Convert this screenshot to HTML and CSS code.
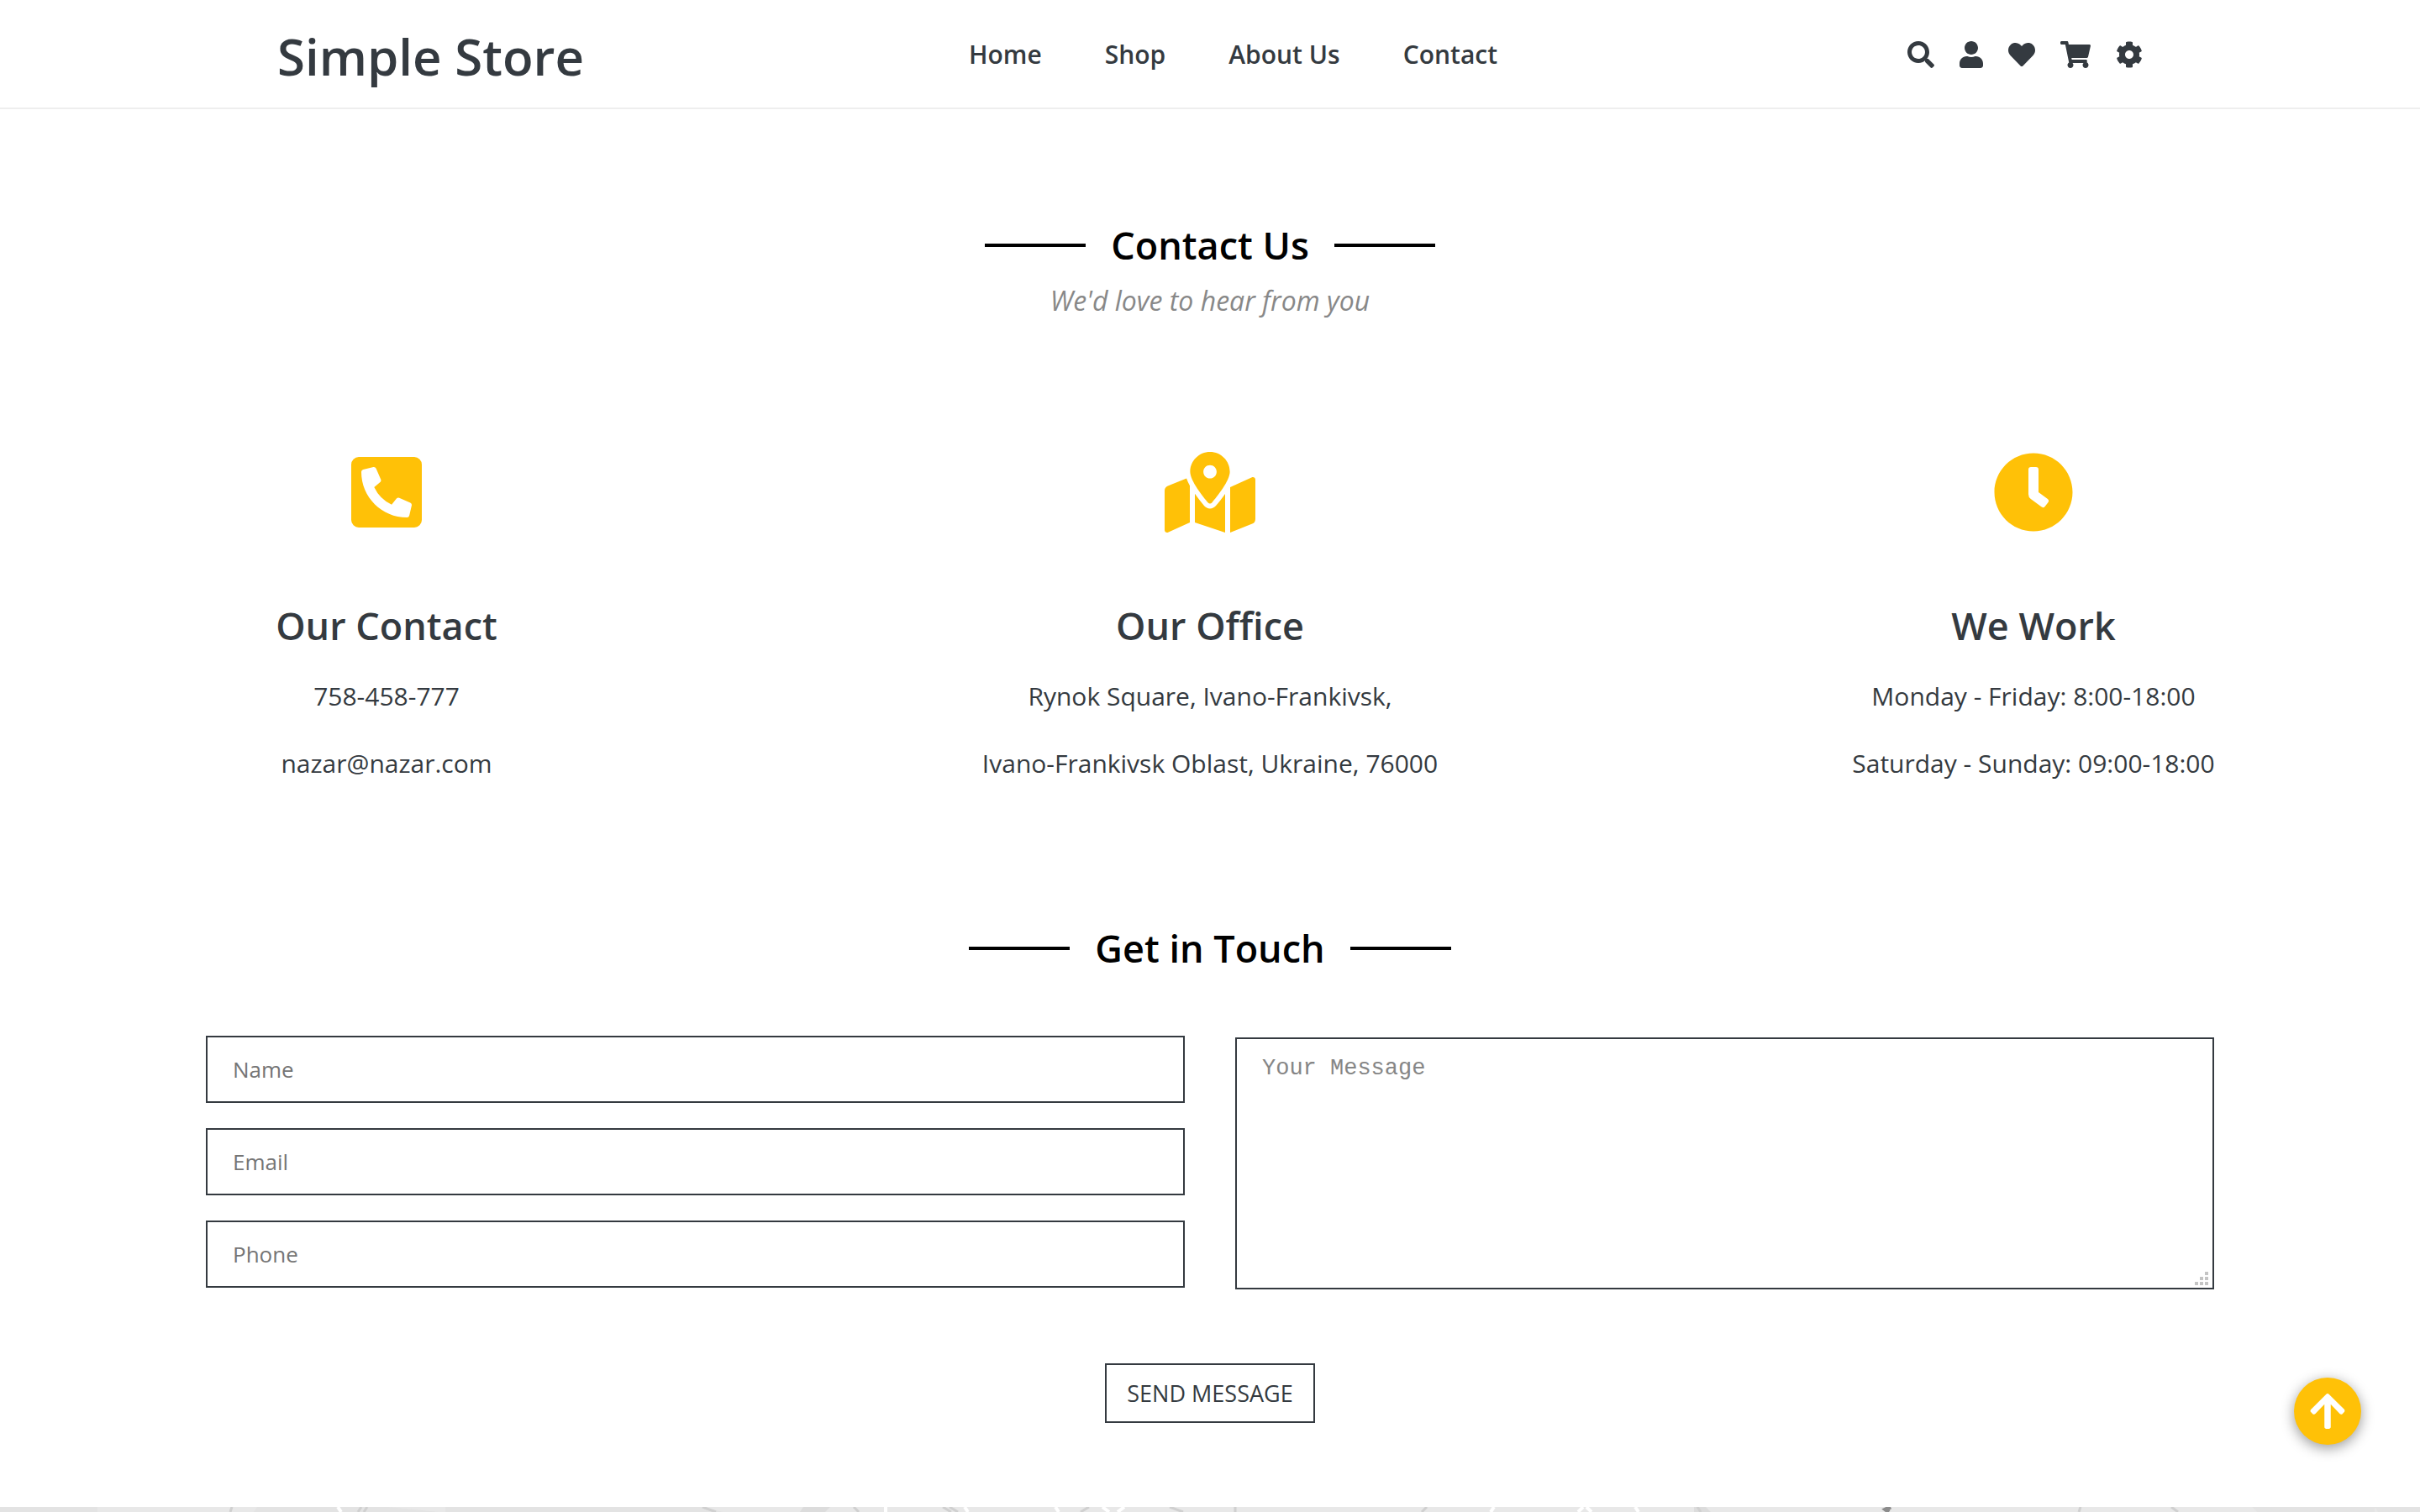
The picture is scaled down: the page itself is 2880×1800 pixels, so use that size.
FILE: index.html
```html
<!DOCTYPE html>
<html lang="en">
<head>
  <meta charset="utf-8">
  <meta name="viewport" content="width=device-width, initial-scale=1">
  <title>Simple Store</title>
  <link rel="stylesheet" href="styles.css">
</head>
<body>
  <header class="header">
    <div class="container header-inner">
      <a class="logo" href="#">Simple Store</a>
      <nav class="nav">
        <a href="#">Home</a>
        <a href="#">Shop</a>
        <a href="#">About Us</a>
        <a href="#">Contact</a>
      </nav>
      <div class="tools">
        <a href="#" aria-label="Search"><svg class="icon" viewBox="0 0 512 512"><path d="M505 442.7L405.3 343c-4.500-4.500-10.600-7-17-7H372c27.600-35.300 44-79.700 44-128C416 93.100 322.900 0 208 0S0 93.100 0 208s93.100 208 208 208c48.300 0 92.700-16.400 128-44v16.300c0 6.400 2.500 12.500 7 17l99.700 99.700c9.400 9.400 24.600 9.400 33.900 0l28.300-28.300c9.400-9.400 9.400-24.600.1-34zM208 336c-70.700 0-128-57.200-128-128 0-70.700 57.200-128 128-128 70.700 0 128 57.200 128 128 0 70.700-57.200 128-128 128z"/></svg></a>
        <a href="#" aria-label="Account"><svg class="icon" viewBox="0 0 448 512"><path d="M224 256c70.700 0 128-57.300 128-128S294.700 0 224 0 96 57.300 96 128s57.300 128 128 128zm89.600 32h-16.700c-22.200 10.200-46.900 16-72.900 16s-50.600-5.800-72.900-16h-16.700C60.200 288 0 348.200 0 422.400V464c0 26.500 21.500 48 48 48h352c26.500 0 48-21.500 48-48v-41.600c0-74.200-60.200-134.400-134.400-134.400z"/></svg></a>
        <a href="#" aria-label="Wishlist"><svg class="icon" viewBox="0 0 512 512"><path d="M462.300 62.600C407.500 15.900 326 24.300 275.700 76.200L256 96.500l-19.700-20.300C186.100 24.300 104.500 15.900 49.700 62.600c-62.800 53.600-66.100 149.800-9.900 207.900l193.500 199.800c12.500 12.900 32.800 12.900 45.300 0l193.500-199.800c56.300-58.100 53-154.300-9.800-207.900z"/></svg></a>
        <a href="#" aria-label="Cart"><svg class="icon" viewBox="0 0 576 512"><path d="M528.120 301.319l47.273-208C578.806 78.301 567.391 64 551.990 64H159.208l-9.166-44.810C147.758 8.021 137.930 0 126.529 0H24C10.745 0 0 10.745 0 24v16c0 13.255 10.745 24 24 24h69.883l70.248 343.435C147.325 417.100 136 435.222 136 456c0 30.928 25.072 56 56 56s56-25.072 56-56c0-15.674-6.447-29.835-16.824-40h209.647C430.447 426.165 424 440.326 424 456c0 30.928 25.072 56 56 56s56-25.072 56-56c0-22.172-12.888-41.332-31.579-50.405l5.517-24.276c3.413-15.018-8.002-29.319-23.403-29.319H218.117l-6.545-32h293.145c11.206 0 20.920-7.754 23.403-18.681z"/></svg></a>
        <a href="#" aria-label="Settings"><svg class="icon" viewBox="0 0 512 512"><path d="M487.400 315.700l-42.600-24.600c4.300-23.200 4.300-47 0-70.200l42.600-24.600c4.900-2.800 7.100-8.600 5.500-14-11.100-35.600-30-67.800-54.700-94.600-3.800-4.100-10-5.100-14.800-2.300L380.800 110c-17.900-15.400-38.500-27.300-60.800-35.100V25.800c0-5.600-3.900-10.500-9.400-11.700-36.700-8.200-74.300-7.800-109.200 0-5.500 1.200-9.400 6.100-9.400 11.700V75c-22.200 7.900-42.800 19.800-60.800 35.100L88.700 85.500c-4.900-2.800-11-1.900-14.800 2.300-24.700 26.700-43.600 58.900-54.700 94.600-1.700 5.400.6 11.200 5.500 14L67.300 221c-4.300 23.200-4.300 47 0 70.200l-42.600 24.600c-4.900 2.800-7.100 8.600-5.500 14 11.100 35.600 30 67.800 54.700 94.600 3.800 4.100 10 5.100 14.800 2.300l42.600-24.600c17.900 15.400 38.500 27.300 60.800 35.100v49.200c0 5.600 3.900 10.500 9.400 11.700 36.700 8.200 74.300 7.800 109.200 0 5.500-1.200 9.400-6.100 9.400-11.700v-49.200c22.200-7.900 42.800-19.800 60.800-35.100l42.600 24.600c4.900 2.800 11 1.900 14.800-2.300 24.700-26.700 43.600-58.900 54.700-94.600 1.500-5.500-.7-11.300-5.600-14.100zM256 336c-44.100 0-80-35.900-80-80s35.900-80 80-80 80 35.900 80 80-35.900 80-80 80z"/></svg></a>
      </div>
    </div>
  </header>

  <main>
    <section class="container contact">
      <h1 class="title">Contact Us</h1>
      <p class="subtitle">We'd love to hear from you</p>
      <div class="cards">
        <article class="card">
          <svg class="card-icon" viewBox="0 0 448 512"><path d="M400 32H48A48 48 0 0 0 0 80v352a48 48 0 0 0 48 48h352a48 48 0 0 0 48-48V80a48 48 0 0 0-48-48zm-16.390 307.370l-15 65A15 15 0 0 1 354 416C194 416 64 286.290 64 126a15.700 15.700 0 0 1 11.630-14.610l65-15A18.230 18.230 0 0 1 144 96a16.270 16.270 0 0 1 13.790 9.090l30 70A17.900 17.900 0 0 1 189 181a17 17 0 0 1-5.500 11.610l-37.890 31a231.910 231.910 0 0 0 110.780 110.780l31-37.890A17 17 0 0 1 299 291a17.850 17.850 0 0 1 5.910 1.210l70 30A16.250 16.250 0 0 1 384 336a17.410 17.410 0 0 1-.39 3.370z"/></svg>
          <h2>Our Contact</h2>
          <p>758-458-777</p>
          <p>nazar@nazar.com</p>
        </article>
        <article class="card">
          <svg class="card-icon" viewBox="0 0 576 512"><path d="M288 0c-69.590 0-126 56.410-126 126 0 56.260 82.350 158.800 113.900 196.020 6.390 7.540 17.820 7.540 24.200 0C331.650 284.800 414 182.260 414 126 414 56.410 357.590 0 288 0zm0 168c-23.200 0-42-18.800-42-42s18.800-42 42-42 42 18.800 42 42-18.800 42-42 42zM20.120 215.950A32.006 32.006 0 0 0 0 245.660v250.320c0 11.320 11.430 19.060 21.940 14.860L160 448V214.920c-8.840-15.980-16.070-31.540-21.250-46.420L20.120 215.950zM288 359.670c-14.070 0-27.380-6.180-36.510-16.960-19.660-23.200-40.570-49.620-59.490-76.720v182l192 64V266c-18.920 27.090-39.820 53.520-59.490 76.720-9.130 10.770-22.440 16.950-36.510 16.950zm266.060-198.510L416 224v288l139.880-55.950A31.996 31.996 0 0 0 576 426.340V176.020c0-11.320-11.430-19.060-21.940-14.860z"/></svg>
          <h2>Our Office</h2>
          <p>Rynok Square, Ivano-Frankivsk,</p>
          <p>Ivano-Frankivsk Oblast, Ukraine, 76000</p>
        </article>
        <article class="card">
          <svg class="card-icon" viewBox="0 0 512 512"><path d="M256,8C119,8,8,119,8,256S119,504,256,504,504,393,504,256,393,8,256,8Zm92.490,313h0l-20,25a16,16,0,0,1-22.490,2.500h0l-67-49.720a40,40,0,0,1-15-31.230V112a16,16,0,0,1,16-16h32a16,16,0,0,1,16,16V256l58,42.500A16,16,0,0,1,348.490,321Z"/></svg>
          <h2>We Work</h2>
          <p>Monday - Friday: 8:00-18:00</p>
          <p>Saturday - Sunday: 09:00-18:00</p>
        </article>
      </div>
    </section>

    <section class="container touch">
      <h2 class="title">Get in Touch</h2>
      <form class="form">
        <div class="fields">
          <input class="field" type="text" placeholder="Name" aria-label="Name">
          <input class="field" type="email" placeholder="Email" aria-label="Email">
          <input class="field" type="tel" placeholder="Phone" aria-label="Phone">
        </div>
        <div class="message">
          <textarea class="field message-box" placeholder="Your Message" aria-label="Your Message"></textarea>
          <svg class="grip" viewBox="0 0 16 16" aria-hidden="true"><path d="M12 0h4v4h-4zM6 6h4v4H6zM12 6h4v4h-4zM0 12h4v4H0zM6 12h4v4H6zM12 12h4v4h-4z"/></svg>
        </div>
        <button class="send" type="submit">SEND MESSAGE</button>
      </form>
    </section>
  </main>

  <footer class="footer">
    <svg class="footer-art" viewBox="0 0 2880 6" preserveAspectRatio="none" aria-hidden="true">
      <path fill="#e3e3e3" d="M0 0h116v6H0zM306 0h156l60 6H302zM530 0h140v6H530zM670 0h166l24 6H666zM2680 0h146v6h-140zM2826 0h54v6h-50z"/>
      <path fill="#dcdcdc" d="M956 0h32l-6 6h-30zM2016 0h14l6 6h-20z"/>
      <path fill="none" stroke="#d0d0d0" stroke-width="3" d="M276 0l-2 6M430 0l-4 6M437 0l-4 6M836 0l16 6M1016 0l6 6M1122 0l10 6M1130 0l10 6M1296 0l-10 6M1392 0l16 6M1470 0v6M1698 0l-6 6M2020 0l4 6M2476 0l-2 6M2584 0l8 6"/>
      <path fill="none" stroke="#fff" stroke-width="4" d="M402 0l4 6M1054 0v6M1148 0l4 6M1256 0l4 6M1312 0l8 6M1338 0l-8 6M1778 0l-4 6M1884 0l-6 6M1888 0l6 6M1946 0l4 6"/>
      <path fill="none" stroke="#8c8c8c" stroke-width="5" d="M2250 0l-6 3 4 3"/>
    </svg>
  </footer>

  <button class="to-top" type="button" aria-label="Back to top">
    <svg viewBox="0 0 448 512"><path d="M34.900 289.500l-22.200-22.200c-9.400-9.400-9.400-24.600 0-33.900L207 39c9.400-9.400 24.600-9.400 33.900 0l194.300 194.300c9.400 9.400 9.400 24.600 0 33.900L413 289.400c-9.500 9.500-25 9.300-34.300-.4L264 168.600V456c0 13.300-10.700 24-24 24h-32c-13.300 0-24-10.700-24-24V168.600L69.200 289.100c-9.300 9.800-24.800 10-34.300.4z"/></svg>
  </button>
</body>
</html>
```
FILE: styles.css
```css
:root {
  --dark: #343a40;
  --accent: #ffc107;
}

* {
  box-sizing: border-box;
}

body {
  display: flex;
  flex-direction: column;
  min-height: 100vh;
  margin: 0;
  background: #fff;
  color: var(--dark);
  font-family: "Open Sans", "Noto Sans", sans-serif;
  font-size: 30px;
}

h1,
h2,
p {
  margin: 0;
}

a {
  color: inherit;
  text-decoration: none;
}

.container {
  width: 100%;
  max-width: 2400px;
  margin: 0 auto;
}

.header {
  border-bottom: 2px solid #eee;
}

.header-inner {
  display: flex;
  align-items: center;
  justify-content: space-between;
  min-height: 128px;
  padding: 2px 90px 0;
}

.logo {
  padding-top: 4px;
  font-size: 60px;
  font-weight: 600;
  line-height: 80px;
}

.nav {
  display: flex;
  gap: 75px;
  padding-right: 30px;
  font-weight: 600;
  line-height: 48px;
}

.tools {
  display: flex;
  gap: 30px;
}

.icon {
  display: block;
  height: 32px;
  fill: currentColor;
}

.contact {
  padding-top: 126px;
}

.title {
  display: flex;
  align-items: center;
  justify-content: center;
  gap: 30px;
  color: #000;
  font-size: 45px;
  font-weight: 600;
  line-height: 72px;
}

.title::before,
.title::after {
  content: "";
  width: 120px;
  height: 4px;
  background: #000;
}

.subtitle {
  margin-top: 6px;
  color: #888;
  font-size: 32px;
  font-style: italic;
  line-height: 48px;
  text-align: center;
}

.cards {
  display: flex;
  justify-content: space-between;
  margin-top: 156px;
}

.card {
  display: flex;
  flex-direction: column;
  align-items: center;
  min-width: 440px;
  line-height: 80px;
}

.card-icon {
  height: 96px;
  fill: var(--accent);
}

.card h2 {
  margin: 75px 0 8px;
  font-size: 45px;
  font-weight: 600;
  line-height: 72px;
}

.touch {
  padding: 144px 5px 100px;
}

.form {
  display: grid;
  grid-template-columns: 1fr 1fr;
  column-gap: 60px;
  margin-top: 68px;
}

.fields {
  display: grid;
  align-content: start;
  gap: 30px;
}

.field {
  display: block;
  width: 100%;
  height: 80px;
  padding: 0 30px;
  border: 2px solid var(--dark);
  border-radius: 0;
  background: #fff;
  color: var(--dark);
  font-family: inherit;
  font-size: 26px;
}

.field::placeholder {
  color: #757575;
  opacity: 1;
}

.message {
  position: relative;
  padding-top: 2px;
}

.message-box {
  height: 300px;
  padding: 20px 30px;
  font-family: "Liberation Mono", monospace;
  font-size: 27px;
  resize: none;
}

.message-box::placeholder {
  color: #868686;
}

.grip {
  position: absolute;
  right: 7px;
  bottom: 5px;
  width: 16px;
  height: 16px;
  fill: #c4c4c4;
}

.send {
  grid-column: 1 / -1;
  justify-self: center;
  height: 71px;
  margin-top: 88px;
  padding: 0 24px;
  border: 2px solid var(--dark);
  background: #fff;
  color: var(--dark);
  font-family: inherit;
  font-size: 27px;
}

.footer {
  flex: 1;
  min-height: 6px;
  background: #e8e8e8;
}

.footer-art {
  display: block;
  width: 100%;
  height: 6px;
}

.to-top {
  position: fixed;
  right: 70px;
  bottom: 80px;
  display: grid;
  place-items: center;
  width: 80px;
  height: 80px;
  padding: 0;
  border: 0;
  border-radius: 50%;
  background: var(--accent);
  box-shadow: 0 4px 16px rgba(0, 0, 0, 0.4);
}

.to-top svg {
  height: 48px;
  fill: #fff;
}
```
